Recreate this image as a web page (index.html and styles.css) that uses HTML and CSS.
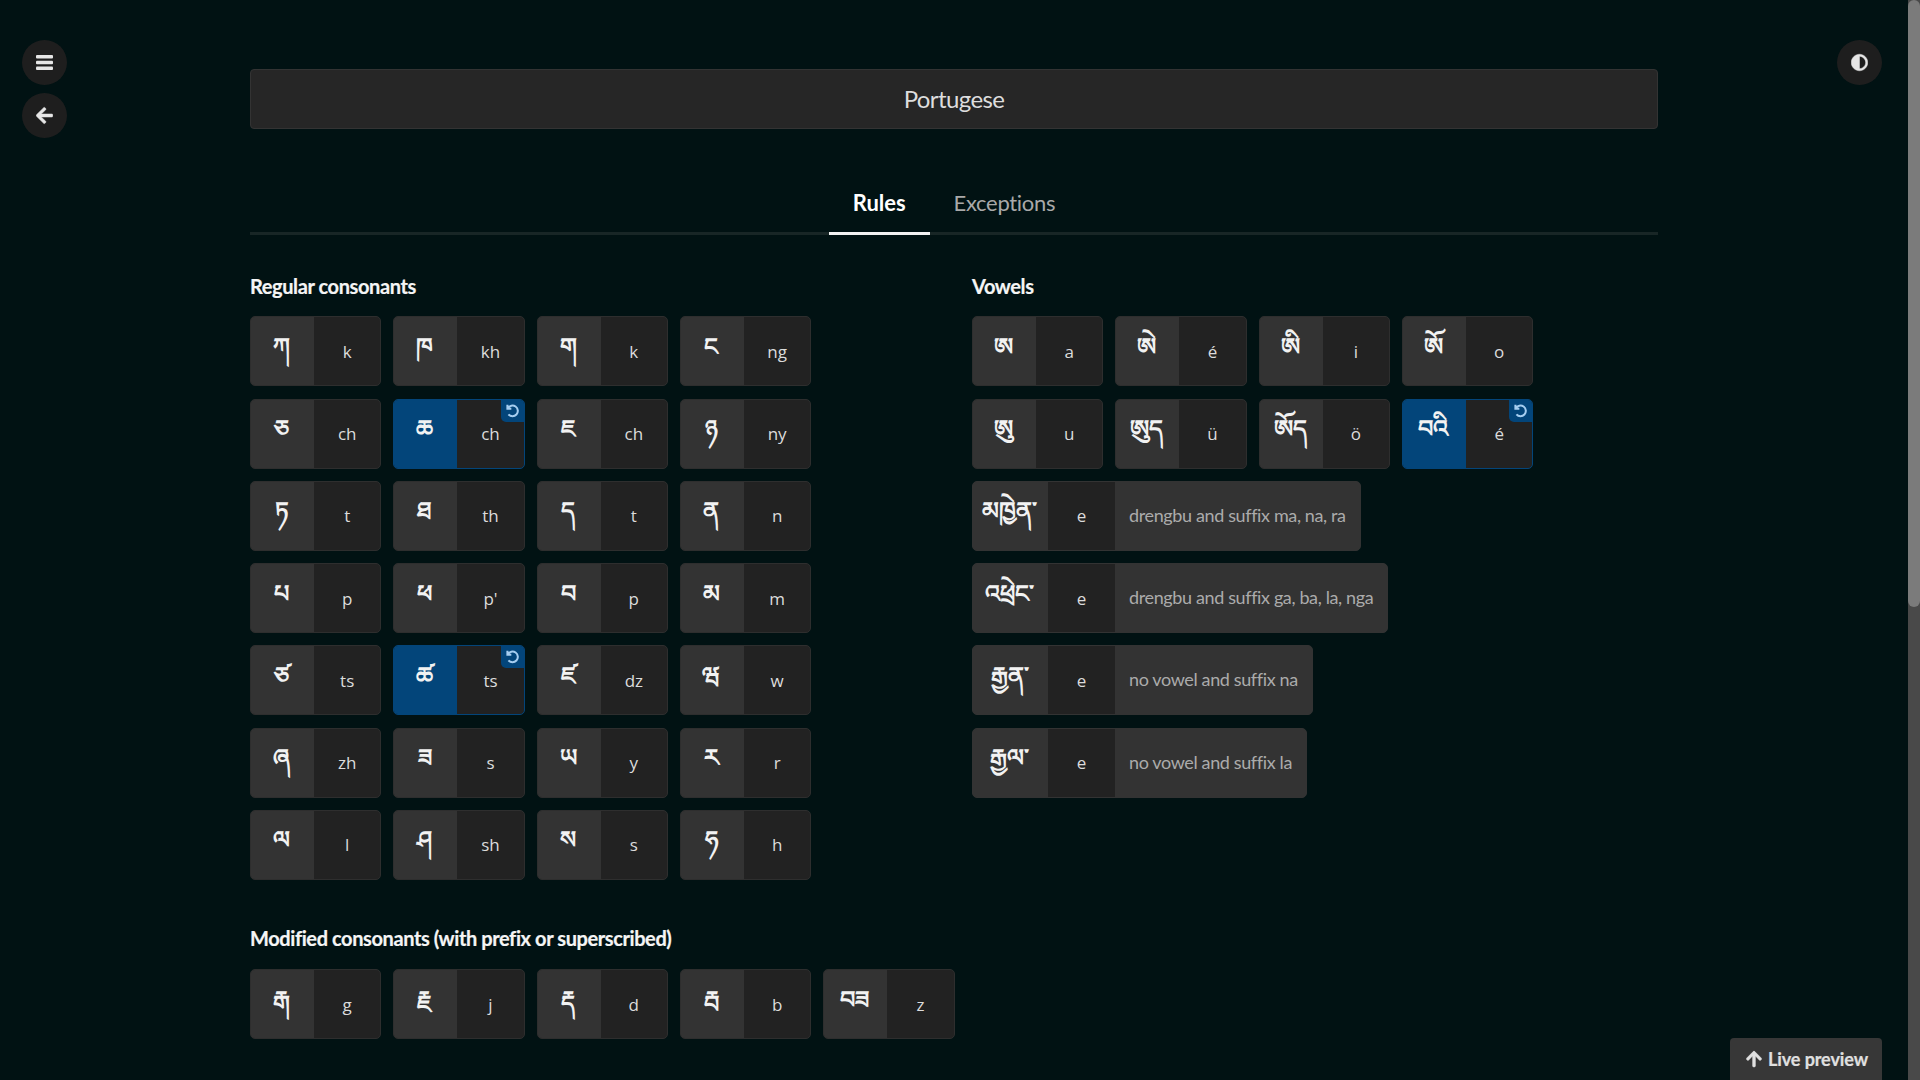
FILE: index.html
```html
<!DOCTYPE html>
<html lang="en">
<head>
<meta charset="utf-8">
<title>Portugese</title>
<link rel="stylesheet" href="styles.css">
</head>
<body>
<div class="page">
  <div class="content">
    <nav class="side-left">
      <button class="round"><svg class="ico-bars" viewBox="0 0 17 15"><rect width="17" height="3.600" rx="1"/><rect y="5.700" width="17" height="3.600" rx="1"/><rect y="11.400" width="17" height="3.600" rx="1"/></svg></button>
      <button class="round"><svg class="ico" viewBox="0 0 448 512"><path d="M257.500 445.100l-22.200 22.200c-9.400 9.400-24.600 9.400-33.900 0L7 273c-9.400-9.400-9.400-24.600 0-33.900L201.400 44.700c9.400-9.400 24.600-9.400 33.900 0l22.200 22.200c9.500 9.500 9.300 25-.4 34.300L136.600 216H424c13.300 0 24 10.700 24 24v32c0 13.300-10.700 24-24 24H136.600l120.500 114.800c9.800 9.300 10 24.800.4 34.300z"/></svg></button>
    </nav>
    <button class="round side-right"><svg class="ico" viewBox="0 0 512 512"><path d="M8 256c0 136.966 111.033 248 248 248s248-111.034 248-248S392.966 8 256 8 8 119.033 8 256zm248 184V72c101.705 0 184 82.311 184 184 0 101.705-82.311 184-184 184z"/></svg></button>
    <main class="main">
      <header class="title">Portugese</header>
      <div class="tabs">
        <span class="tab active">Rules</span>
        <span class="tab">Exceptions</span>
      </div>
      <div class="columns">
        <section>
          <h2>Regular consonants</h2>
          <div class="cards four">
            <div class="card"><span class="tib">ཀ</span><span class="val">k</span></div>
            <div class="card"><span class="tib">ཁ</span><span class="val">kh</span></div>
            <div class="card"><span class="tib">ག</span><span class="val">k</span></div>
            <div class="card"><span class="tib">ང</span><span class="val">ng</span></div>
            <div class="card"><span class="tib">ཅ</span><span class="val">ch</span></div>
            <div class="card mod"><span class="tib">ཆ</span><span class="val">ch</span><span class="reset"><svg viewBox="0 0 16 16"><path d="M3.200 2.600v3.700h3.700M3.600 6a5 5 0 1 1 .6 5.600"/></svg></span></div>
            <div class="card"><span class="tib">ཇ</span><span class="val">ch</span></div>
            <div class="card"><span class="tib">ཉ</span><span class="val">ny</span></div>
            <div class="card"><span class="tib">ཏ</span><span class="val">t</span></div>
            <div class="card"><span class="tib">ཐ</span><span class="val">th</span></div>
            <div class="card"><span class="tib">ད</span><span class="val">t</span></div>
            <div class="card"><span class="tib">ན</span><span class="val">n</span></div>
            <div class="card"><span class="tib">པ</span><span class="val">p</span></div>
            <div class="card"><span class="tib">ཕ</span><span class="val">p'</span></div>
            <div class="card"><span class="tib">བ</span><span class="val">p</span></div>
            <div class="card"><span class="tib">མ</span><span class="val">m</span></div>
            <div class="card"><span class="tib">ཙ</span><span class="val">ts</span></div>
            <div class="card mod"><span class="tib">ཚ</span><span class="val">ts</span><span class="reset"><svg viewBox="0 0 16 16"><path d="M3.200 2.600v3.700h3.700M3.600 6a5 5 0 1 1 .6 5.600"/></svg></span></div>
            <div class="card"><span class="tib">ཛ</span><span class="val">dz</span></div>
            <div class="card"><span class="tib">ཝ</span><span class="val">w</span></div>
            <div class="card"><span class="tib">ཞ</span><span class="val">zh</span></div>
            <div class="card"><span class="tib">ཟ</span><span class="val">s</span></div>
            <div class="card"><span class="tib">ཡ</span><span class="val">y</span></div>
            <div class="card"><span class="tib">ར</span><span class="val">r</span></div>
            <div class="card"><span class="tib">ལ</span><span class="val">l</span></div>
            <div class="card"><span class="tib">ཤ</span><span class="val">sh</span></div>
            <div class="card"><span class="tib">ས</span><span class="val">s</span></div>
            <div class="card"><span class="tib">ཧ</span><span class="val">h</span></div>
          </div>
        </section>
        <section>
          <h2>Vowels</h2>
          <div class="cards four">
            <div class="card"><span class="tib">ཨ</span><span class="val">a</span></div>
            <div class="card"><span class="tib">ཨེ</span><span class="val">é</span></div>
            <div class="card"><span class="tib">ཨི</span><span class="val">i</span></div>
            <div class="card"><span class="tib">ཨོ</span><span class="val">o</span></div>
            <div class="card"><span class="tib">ཨུ</span><span class="val">u</span></div>
            <div class="card"><span class="tib">ཨུད</span><span class="val">ü</span></div>
            <div class="card"><span class="tib">ཨོད</span><span class="val">ö</span></div>
            <div class="card mod"><span class="tib">བའི</span><span class="val">é</span><span class="reset"><svg viewBox="0 0 16 16"><path d="M3.200 2.600v3.700h3.700M3.600 6a5 5 0 1 1 .6 5.600"/></svg></span></div>
            <div class="card wide"><span class="tib">མཁྱེན་</span><span class="val">e</span><span class="desc">drengbu and suffix ma, na, ra</span></div>
            <div class="card wide"><span class="tib">འཕྲེང་</span><span class="val">e</span><span class="desc">drengbu and suffix ga, ba, la, nga</span></div>
            <div class="card wide"><span class="tib">རྒྱན་</span><span class="val">e</span><span class="desc">no vowel and suffix na</span></div>
            <div class="card wide"><span class="tib">རྒྱལ་</span><span class="val">e</span><span class="desc">no vowel and suffix la</span></div>
          </div>
        </section>
      </div>
      <section class="modified">
        <h2>Modified consonants (with prefix or superscribed)</h2>
        <div class="cards">
          <div class="card"><span class="tib">རྒ</span><span class="val">g</span></div>
          <div class="card"><span class="tib">རྗ</span><span class="val">j</span></div>
          <div class="card"><span class="tib">རྡ</span><span class="val">d</span></div>
          <div class="card"><span class="tib">རྦ</span><span class="val">b</span></div>
          <div class="card"><span class="tib">བཟ</span><span class="val">z</span></div>
        </div>
      </section>
    </main>
    <button class="preview"><svg class="ico-up" viewBox="0 0 448 512"><path d="M34.900 289.500l-22.200-22.200c-9.400-9.400-9.400-24.600 0-33.900L207 39c9.400-9.400 24.600-9.400 33.900 0l194.300 194.300c9.400 9.400 9.400 24.600 0 33.900L413 289.400c-9.500 9.500-25 9.300-34.300-.4L264 168.600V456c0 13.300-10.700 24-24 24h-32c-13.300 0-24-10.700-24-24V168.600L69.200 289.100c-9.300 9.800-24.800 10-34.300.4z"/></svg>Live preview</button>
  </div>
  <div class="scrollbar"><div class="thumb"></div></div>
</div>
</body>
</html>
```

FILE: styles.css
```css
* { box-sizing: border-box; }
html, body { margin: 0; height: 100%; overflow: hidden; }
body { background: #011213; color: #e6e6e6; font-family: "Lato", "Noto Sans", sans-serif; }

.page { display: flex; height: 100vh; }
.content { flex: 1; min-width: 0; height: 100%; overflow: hidden; }
.scrollbar { flex: none; width: 12px; background: #494949; }
.thumb { height: 607px; background: #7b7b7b; border-radius: 6px; }

.round { width: 45px; height: 45px; border: 0; padding: 0; border-radius: 50%; background: #1e1e1e; color: #e6e6e6; display: flex; align-items: center; justify-content: center; }
.ico { width: 17px; height: 19px; fill: currentColor; stroke: currentColor; stroke-width: 14; }
.ico-bars { width: 17px; height: 15px; fill: currentColor; }
.side-left { position: fixed; left: 22px; top: 40px; display: flex; flex-direction: column; gap: 8px; }
.side-right { position: fixed; left: 1837px; top: 40px; }

.main { width: 1408px; margin: 0 auto; padding-top: 69px; }
.title { height: 60px; padding-bottom: 2px; background: #262626; border: 1px solid #333; border-radius: 4px; display: flex; align-items: center; justify-content: center; font-size: 24px; letter-spacing: -0.6px; color: #ddd; }

.tabs { display: flex; justify-content: center; margin-top: 46px; height: 60px; border-bottom: 3px solid #182626; }
.tab { height: 60px; padding: 14px 24px 0; font-size: 22px; letter-spacing: -0.3px; color: #a9a9a9; }
.tab.active { color: #fff; font-weight: 700; letter-spacing: -0.05px; border-bottom: 3px solid #f2f2f2; }

.columns { display: grid; grid-template-columns: 722px 1fr; margin-top: 40px; }
h2 { margin: 0 0 17.4px; height: 24px; font-size: 20px; line-height: 22px; font-weight: 700; letter-spacing: -0.4px; color: #f5f5f5; -webkit-text-stroke: 0.2px #f5f5f5; }

.cards { display: flex; flex-wrap: wrap; gap: 12.25px 12px; }
.cards.four { max-width: 585px; }

.card { position: relative; display: flex; width: 131.33px; height: 70px; border: 1px solid #2e2e2e; border-radius: 5px; overflow: hidden; background: #222; }
.tib { flex: none; min-width: 63px; padding: 4px 12px 0 10px; background: #333; color: #f2f2f2; display: flex; align-items: center; justify-content: center; font-family: "DejaVu Sans", "Noto Sans", sans-serif; font-size: 24px; font-weight: 700; white-space: nowrap; }
.val { flex: 1; display: flex; align-items: center; justify-content: center; font-family: "Open Sans", sans-serif; font-size: 17px; color: #dcdcdc; }

.card.wide { width: auto; background: #333; border-color: #333; }
.wide .tib { width: 75px; padding: 4px 2px 0 0; }
.wide .val { flex: none; width: 67px; background: #222; }
.desc { padding: 0 14px 2px; display: flex; align-items: center; font-size: 18px; letter-spacing: -0.37px; color: #ababab; white-space: nowrap; }

.card.mod { border-color: #03457a; }
.mod .tib { background: #03457a; }
.reset { position: absolute; top: -1px; right: 0; width: 23px; height: 23px; background: #03457a; border-bottom-left-radius: 5px; display: flex; align-items: center; justify-content: center; }
.reset svg { width: 17px; height: 17px; fill: none; stroke: #a5cdf0; stroke-width: 1.900; }

.modified { margin-top: 47.5px; }
.modified h2 { margin-bottom: 18px; }

.preview { position: fixed; left: 1730px; top: 1038px; width: 152px; height: 60px; padding: 0 0 18px 2px; border: 0; border-radius: 4px 4px 0 0; background: #373737; color: #e0e0e0; font-family: "Lato", sans-serif; font-weight: 700; font-size: 18px; letter-spacing: -0.1px; display: flex; align-items: center; justify-content: center; gap: 6px; -webkit-text-stroke: 0.2px #e0e0e0; }
.ico-up { width: 16px; height: 18px; fill: currentColor; stroke: currentColor; stroke-width: 14; }
```
